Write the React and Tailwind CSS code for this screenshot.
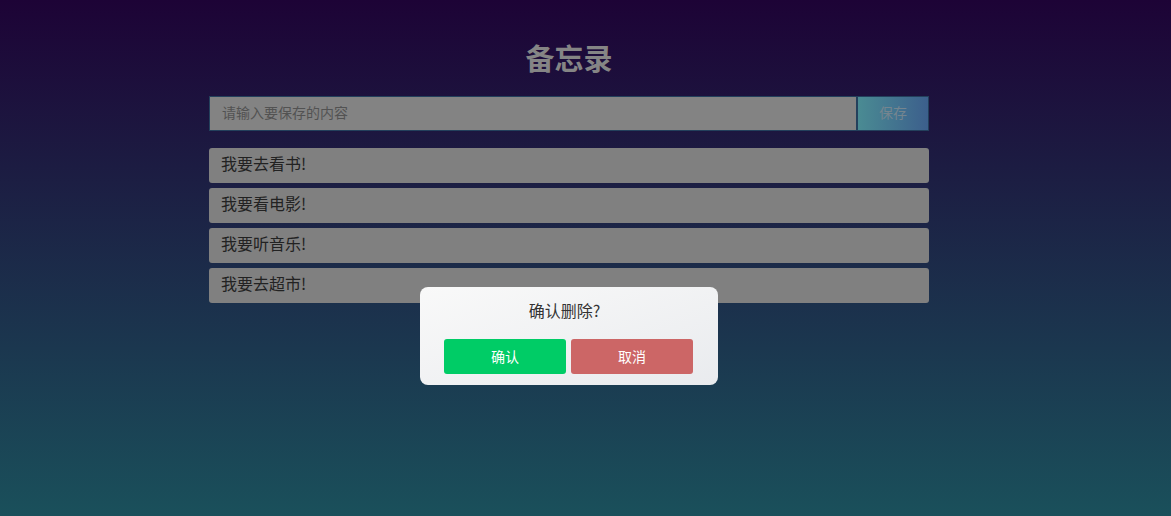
export default function App() {
  const items = ["我要去看书!", "我要看电影!", "我要听音乐!", "我要去超市!"];
  return (
    <div
      className="h-[516px] w-full bg-linear-to-b/srgb from-[#1d0336] to-[#1a505b] overflow-hidden"
      style={{ fontFamily: '"Noto Sans CJK SC", "Noto Sans", sans-serif' }}
    >
      <div className="w-[1138px]">
        <div className="relative mx-auto w-[720px] pt-[37px]">
          <h1 className="text-center text-[29px] leading-[40px] font-bold text-[#858585]">备忘录</h1>
          <div className="mt-[19px] flex h-[35px]">
            <input
              className="h-full flex-1 border border-[#23405c] bg-[#838383] px-3 pb-[4px] text-[14px] text-[#333] placeholder:text-[#525252] outline-none"
              placeholder="请输入要保存的内容"
            />
            <button className="h-full w-[72px] border border-[#23405c] bg-linear-to-r/srgb from-[#4a8b93] to-[#3c5f8c] pb-[3px] text-[14px] text-[#75858f]">
              保存
            </button>
          </div>
          <ul className="mt-[17px] flex flex-col gap-[5px]">
            {items.map((t) => (
              <li
                key={t}
                className="flex h-[35px] items-center rounded-[3px] bg-[#808080] pl-3 pb-[5px] text-[16px] text-[#222]"
              >
                {t}
              </li>
            ))}
          </ul>
          <div className="absolute left-[211px] top-[287px] w-[298px] rounded-[8px] bg-linear-to-br/srgb from-[#f9f9f9] to-[#e9ebee] px-6 pt-[11px] pb-[11px]">
            <p className="pr-[9px] text-center text-[16px] leading-6 text-[#333]">确认删除?</p>
            <div className="mt-[17px] flex gap-[5px]">
              <button className="h-[35px] w-[122px] rounded-[3px] bg-[#00cc66] text-[14px] text-white">确认</button>
              <button className="h-[35px] w-[122px] rounded-[3px] bg-[#cc6666] text-[14px] text-white">取消</button>
            </div>
          </div>
        </div>
      </div>
    </div>
  );
}
